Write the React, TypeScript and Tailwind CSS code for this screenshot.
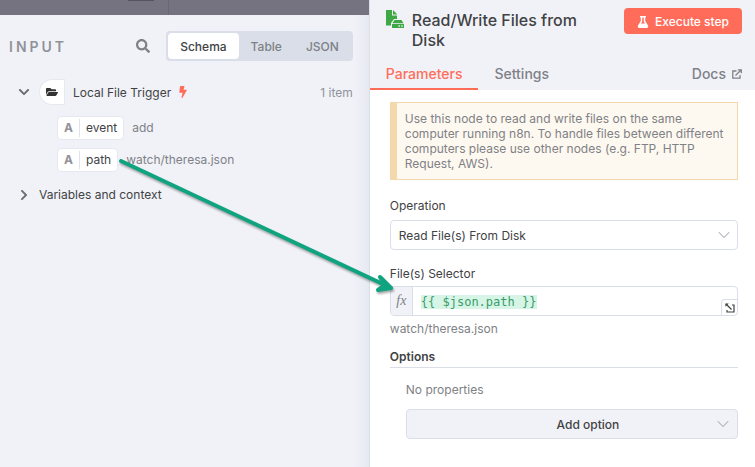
import React from 'react';
import { FaSearch, FaChevronDown, FaChevronRight, FaFolderOpen, FaBolt, FaFlask } from 'react-icons/fa';
import { ChevronDown } from 'lucide-react';

const views = ['Schema', 'Table', 'JSON'];

const fields = [
  { name: 'event', value: 'add' },
  { name: 'path', value: 'watch/theresa.json' },
];

const DiskFileIcon = () => (
  <svg viewBox="0 0 18 18" className="h-[18px] w-[18px] shrink-0" fill="#3fa844" aria-hidden="true">
    <path d="M0 0h6v5.5h5V9H8L5 13v2.5H0z" />
    <path d="M7 0l4.3 4.5H7z" />
    <path d="M8.5 10h7l2 3.2h-11z" />
    <path fillRule="evenodd" d="M6 14h12v4H6zM12.5 15.3v1.4h1.4v-1.4zM15.3 15.3v1.4h1.4v-1.4z" />
  </svg>
);

const ExternalIcon = () => (
  <svg viewBox="0 0 10 10" className="h-[10px] w-[10px]" fill="none" stroke="currentColor" strokeWidth="1.3" aria-hidden="true">
    <path d="M4.5 2H.8v7.2H8V6" />
    <path d="M3.5 6.5L9 1M5.8.8h3.5v3.5" />
  </svg>
);

const ExpandIcon = () => (
  <svg viewBox="0 0 10 10" className="h-[10px] w-[10px]" fill="none" stroke="currentColor" strokeWidth="1.2" aria-hidden="true">
    <path d="M7 2h2v7H2V7" />
    <path d="M1 1l5.5 5.5" />
    <path d="M.4.4h3.4L.4 3.8z" fill="currentColor" stroke="none" />
  </svg>
);

const InputPanel = () => {
  return (
    <section className="flex w-[48.85%] shrink-0 flex-col bg-[#f1f2f8]">
      <div className="flex h-[15px] bg-[#767380]">
        <div className="ml-32 h-px w-[26px] bg-[#56535f]" />
        <div className="ml-[14px] w-px bg-[#6b6875]" />
      </div>
      <div className="flex flex-1 flex-col bg-linear-to-l from-[#e6e9f0] to-[#f1f2f8] to-4% pr-4 pl-[9px]">
        <header className="mt-4 flex h-[30px] items-center">
          <h2 className="flex-1 pt-[2px] text-sm font-semibold tracking-[3px] text-[#909298]">INPUT</h2>
          <button aria-label="Search" className="mr-4 text-[#7e8186]">
            <FaSearch className="h-[14px] w-[14px]" />
          </button>
          <div className="flex h-[30px] items-center rounded bg-[#d9dee8] p-[2px]">
            {views.map((view) => (
              <button
                key={view}
                className={
                  view === 'Schema'
                    ? 'h-[26px] rounded bg-white px-3 pt-px text-xs font-medium text-[#414244]'
                    : 'h-[26px] px-3 pt-px text-xs font-medium text-[#7e8186]'
                }
              >
                {view}
              </button>
            ))}
          </div>
        </header>

        <div className="mt-[18px] flex h-[26px] items-center text-xs text-[#414244]">
          <button aria-label="Collapse" className="ml-[9px] text-[#6b6e73]">
            <FaChevronDown className="h-3 w-3" />
          </button>
          <span className="ml-[9px] flex h-[26px] w-[26px] items-center justify-center rounded-l-full rounded-r border border-[#e6e8f0] bg-white text-[#333]">
            <FaFolderOpen className="h-3 w-3" />
          </span>
          <span className="ml-2 pt-[2px]">Local File Trigger</span>
          <FaBolt className="ml-2 h-3 w-[8px] text-[#ff6d5a]" />
          <span className="ml-auto pt-[2px] text-[#909298]">1 item</span>
        </div>

        <ul className="mt-[11px] ml-12 flex flex-col gap-2 text-xs">
          {fields.map((field) => (
            <li key={field.name} className="flex h-6 items-center">
              <span className="flex h-6 items-center rounded border border-[#e6e8f0] bg-white px-[6px] text-[#414244]">
                <b className="mr-[6px] font-bold text-[#909298]">A</b>
                <span className="flex h-[18px] items-center border-l border-[#e0e3ec] pl-[6px]">{field.name}</span>
              </span>
              <span className="ml-2 text-[#7e8186]">{field.value}</span>
            </li>
          ))}
        </ul>

        <button className="mt-[13px] ml-[9px] flex h-5 items-center text-xs text-[#414244]">
          <FaChevronRight className="mr-[9px] h-3 w-3 text-[#6b6e73]" />
          Variables and context
        </button>
      </div>
    </section>
  );
};

const NodePanel = () => {
  return (
    <section className="min-w-0 flex-1 border-l border-[#d9dee8] bg-white text-xs text-[#414244]">
      <header className="flex h-[90px] flex-col bg-[#f1f2f8]">
        <div className="flex items-start pt-2 pr-[13px] pl-4">
          <div className="mt-[2px]">
            <DiskFileIcon />
          </div>
          <h1 className="mt-[2px] mr-10 ml-2 flex-1 text-base leading-5 font-medium">Read/Write Files from Disk</h1>
          <button className="flex h-[26px] shrink-0 items-center rounded bg-[#ff6d5a] px-[13px] pt-px font-medium text-white">
            <FaFlask className="mr-[6px] h-3 w-3" />
            Execute step
          </button>
        </div>
        <nav className="mt-auto flex h-8 justify-between pr-[13px] text-sm font-medium text-[#7e8186]">
          <div className="flex">
            <button className="border-b-2 border-[#ff6d5a] px-4 pt-[2px] text-[#ff6d5a]">Parameters</button>
            <button className="border-b-2 border-transparent px-4 pt-[2px]">Settings</button>
          </div>
          <a href="#docs" className="flex items-center gap-[6px] border-b-2 border-transparent pt-[2px]">
            Docs
            <ExternalIcon />
          </a>
        </nav>
      </header>

      <div className="pt-3 pr-[17px] pl-5">
        <p className="border border-l-[7px] border-[#f2d8ab] bg-[#fef9f0] p-2 leading-[15px] text-[#7e8186]">
          Use this node to read and write files on the same computer running n8n. To handle files between different
          computers please use other nodes (e.g. FTP, HTTP Request, AWS).
        </p>

        <label htmlFor="operation" className="mt-[18px] block leading-4">
          Operation
        </label>
        <div className="mt-[6px] grid items-center">
          <select
            id="operation"
            className="col-start-1 row-start-1 h-[30px] w-full appearance-none rounded border border-[#d9dee8] bg-white px-2 pt-px"
          >
            <option>Read File(s) From Disk</option>
          </select>
          <ChevronDown className="pointer-events-none col-start-1 row-start-1 mr-1 h-5 w-5 justify-self-end text-[#a9adb5]" strokeWidth={1.25} />
        </div>

        <label htmlFor="selector" className="mt-4 block leading-4">
          File(s) Selector
        </label>
        <div className="mt-1 flex h-[30px] overflow-hidden rounded border border-[#d9dee8]">
          <span className="flex w-[22px] items-center justify-center border-r border-[#d9dee8] bg-[#f1f2f8] font-['Liberation_Serif',serif] text-sm text-[#7e8186] italic">
            fx
          </span>
          <div className="flex flex-1 items-center pt-px pl-2">
            <input
              id="selector"
              readOnly
              defaultValue="{{ $json.path }}"
              className="h-[14px] w-[116px] bg-[#d6f5e6] font-['DejaVu_Sans_Mono',monospace] text-xs text-[#3a9c6a]"
            />
          </div>
          <button aria-label="Expand" className="flex h-4 w-4 items-center justify-center self-end rounded-tl border-t border-l border-[#d9dee8]">
            <ExpandIcon />
          </button>
        </div>
        <p className="mt-[5px] leading-4 text-[#7e8186]">watch/theresa.json</p>

        <h2 className="mt-3 border-b border-[#d9dee8] pb-[2px] leading-4 font-semibold">Options</h2>
        <div className="pt-[14px] pl-4">
          <p className="leading-4 text-[#7e8186]">No properties</p>
          <button className="mt-[11px] flex h-[30px] w-full items-center rounded border border-[#d9dee8] bg-[#f1f2f8] pr-1 pl-14">
            <span className="flex-1 pt-px text-center font-medium">Add option</span>
            <ChevronDown className="h-5 w-5 text-[#a9adb5]" strokeWidth={1.25} />
          </button>
        </div>
      </div>
    </section>
  );
};

// Shows the path field being dropped on the selector input.
const MappingArrow = () => (
  <svg
    className="pointer-events-none absolute top-[154px] left-[114px] h-[146px] w-[284px] drop-shadow-[1px_2px_1px_rgba(0,0,0,0.35)]"
    viewBox="0 0 284 146"
    fill="none"
    stroke="#0fa47f"
    strokeWidth="4"
    strokeLinecap="round"
    strokeLinejoin="round"
    aria-hidden="true"
  >
    <path d="M7 7L273 132" />
    <path d="M266 123L277 134L264 136L271 131Z" fill="#0fa47f" />
  </svg>
);

const App = () => {
  return (
    <main className="relative flex min-h-screen font-['Inter',sans-serif]">
      <InputPanel />
      <NodePanel />
      <MappingArrow />
    </main>
  );
};

export default App;
